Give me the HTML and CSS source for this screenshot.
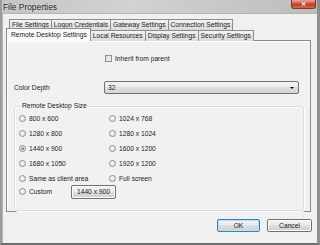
FILE: index.html
```html
<!DOCTYPE html>
<html lang="en">
<head>
    <meta charset="UTF-8">
    <title>File Properties</title>
    <link rel="stylesheet" href="styles.css">
</head>
<body>

<div class="window">
    <div class="titlebar">
        <span class="title">File Properties</span>
        <div class="close"><span>&#x2715;</span></div>
    </div>
    <div class="client">
        <div class="tabs">
            <div class="tab-row back">
                <div class="tab">File Settings</div>
                <div class="tab">Logon Credentials</div>
                <div class="tab">Gateway Settings</div>
                <div class="tab">Connection Settings</div>
            </div>
            <div class="tab-row front">
                <div class="tab selected">Remote Desktop Settings</div>
                <div class="tab">Local Resources</div>
                <div class="tab">Display Settings</div>
                <div class="tab">Security Settings</div>
            </div>
        </div>
        <div class="panel">
            <label class="check-row"><span class="checkbox"></span>Inherit from parent</label>
            <div class="field-row">
                <span class="field-label">Color Depth</span>
                <div class="select"><span>32</span><span class="arrow"></span></div>
            </div>
            <fieldset class="group">
                <legend>Remote Desktop Size</legend>
                <div class="radios">
                    <label class="radio-row"><span class="radio"></span>800 x 600</label>
                    <label class="radio-row"><span class="radio"></span>1024 x 768</label>
                    <label class="radio-row"><span class="radio"></span>1280 x 800</label>
                    <label class="radio-row"><span class="radio"></span>1280 x 1024</label>
                    <label class="radio-row"><span class="radio checked"></span>1440 x 900</label>
                    <label class="radio-row"><span class="radio"></span>1600 x 1200</label>
                    <label class="radio-row"><span class="radio"></span>1680 x 1050</label>
                    <label class="radio-row"><span class="radio"></span>1920 x 1200</label>
                    <label class="radio-row"><span class="radio"></span>Same as client area</label>
                    <label class="radio-row"><span class="radio"></span>Full screen</label>
                    <div class="radio-row custom">
                        <label class="custom-label"><span class="radio"></span>Custom</label>
                        <button class="btn small">1440 x 900</button>
                    </div>
                </div>
            </fieldset>
        </div>
        <div class="actions">
            <button class="btn default">OK</button>
            <button class="btn">Cancel</button>
        </div>
    </div>
</div>

</body>
</html>
```

FILE: styles.css
```css
html, body {
    margin: 0;
    padding: 0;
    background: #f0f0f0;
}
body {
    font-family: "Liberation Sans", Arial, sans-serif;
    font-size: 6.7px;
    color: #1a1a1a;
}
.window {
    width: 320px;
    height: 245px;
    box-sizing: border-box;
    display: flex;
    flex-direction: column;
    background: #c9c9c9;
    border-left: 2px solid #9c9c9c;
    border-right: 3px solid #8f8f8f;
    border-bottom: 2px solid #6f6f6f;
}
.titlebar {
    height: 13px;
    display: flex;
    align-items: flex-start;
    justify-content: space-between;
    background: linear-gradient(to right, #c4c4c4, #d2d2d2 40%, #bdbdbd);
}
.title {
    font-size: 8.4px;
    color: #1e1e1e;
    margin: 2px 0 0 1px;
    text-shadow: 0 0 2px #e8e8e8;
}
.close {
    width: 23px;
    height: 8px;
    margin-right: 1px;
    border: 1px solid #7a3a30;
    border-top: none;
    border-radius: 0 0 3px 3px;
    background: linear-gradient(#e9a99c, #d0553f 45%, #c23a22 55%, #d86a4e);
    display: flex;
    justify-content: center;
    align-items: center;
    color: #fff;
    font-size: 6px;
    font-weight: bold;
}
.close span { margin-top: -1px; }
.client {
    flex: 1;
    background: #f0f0f0;
    border-left: 1px solid #b5b5b5;
    border-top: 1px solid #b5b5b5;
    padding: 5px 4px 0 3px;
    display: flex;
    flex-direction: column;
}
.tab-row {
    display: flex;
}
.tab-row.back {
    margin-left: 3px;
    height: 12px;
}
.tab-row.front {
    margin-top: -2px;
    height: 12px;
    align-items: flex-end;
    position: relative;
    z-index: 1;
    margin-bottom: -1px;
}
.tab {
    box-sizing: border-box;
    height: 11px;
    padding: 1px 2px 0 2px;
    border: 1px solid #898c95;
    border-bottom: none;
    margin-right: -1px;
    background: linear-gradient(#f4f4f4, #e6e6e6 50%, #dbdbdb);
    white-space: nowrap;
    line-height: 8px;
}
.tab.selected {
    height: 13px;
    padding: 2px 3px 0 4px;
    background: #fafafa;
}
.panel {
    height: 172px;
    box-sizing: border-box;
    width: 305px;
    border: 1px solid #898c95;
    background: #f1f1f1;
    box-shadow: inset 1px 1px 0 #fff;
    padding: 0 6px 0 7px;
    display: flex;
    flex-direction: column;
}
.check-row {
    display: flex;
    align-items: center;
    margin: 13px 0 0 91px;
    height: 8px;
}
.checkbox {
    width: 7px;
    height: 7px;
    box-sizing: border-box;
    border: 1px solid #8e8f8f;
    background: linear-gradient(135deg, #dcdcdc, #f6f6f6);
    margin-right: 3px;
}
.field-row {
    display: flex;
    align-items: center;
    margin-top: 19px;
    height: 13px;
}
.field-label {
    width: 90px;
}
.select {
    width: 195px;
    height: 13px;
    box-sizing: border-box;
    border: 1px solid #707070;
    border-radius: 2px;
    background: linear-gradient(#f3f3f3, #ebebeb 50%, #dedede 50%, #d4d4d4);
    display: flex;
    align-items: center;
    justify-content: space-between;
    padding: 0 4px 0 3px;
}
.arrow {
    width: 0;
    height: 0;
    border-left: 2px solid transparent;
    border-right: 2px solid transparent;
    border-top: 2px solid #000;
}
.group {
    margin: 8px 0 0 0;
    padding: 0 4px 9px 4px;
    border: 1px solid #d5dfe5;
    border-radius: 3px;
    box-shadow: inset 1px 1px 0 #fff, 1px 1px 0 #fff;
    min-width: 0;
}
.group legend {
    padding: 0 1px;
    margin-left: 2px;
    line-height: 8px;
}
.radios {
    display: grid;
    grid-template-columns: 90px 1fr;
    grid-auto-rows: 15px;
    margin-top: 1px;
}
.radio-row {
    display: flex;
    align-items: center;
}
.radio {
    width: 7px;
    height: 7px;
    box-sizing: border-box;
    border-radius: 50%;
    border: 1px solid #8e8f8f;
    background: radial-gradient(circle at 40% 40%, #fbfbfb, #d8d8d8);
    margin-right: 3px;
    display: flex;
    justify-content: center;
    align-items: center;
}
.radio.checked::after {
    content: "";
    width: 3px;
    height: 3px;
    border-radius: 50%;
    background: radial-gradient(circle at 40% 40%, #8fc3f0, #1c5a9c);
}
.custom {
    grid-column: 1 / 3;
    height: 15px;
    margin-top: -2px;
}
.custom-label {
    display: flex;
    align-items: center;
    width: 52px;
}
.btn {
    font-family: inherit;
    font-size: inherit;
    color: #1a1a1a;
    height: 13px;
    box-sizing: border-box;
    padding: 0;
    border: 1px solid #707070;
    border-radius: 2px;
    background: linear-gradient(#f2f2f2, #ebebeb 50%, #dddddd 50%, #cfcfcf);
    box-shadow: inset 0 0 0 1px #fcfcfc;
}
.btn.small {
    width: 45px;
    height: 14px;
}
.actions {
    display: flex;
    justify-content: flex-end;
    gap: 7px;
    margin-top: 7px;
    padding-right: 1px;
}
.actions .btn {
    width: 45px;
}
.btn.default {
    width: 43px;
    border-color: #3c7fb1;
    box-shadow: inset 0 0 0 1px #b6e2f9;
}
```
